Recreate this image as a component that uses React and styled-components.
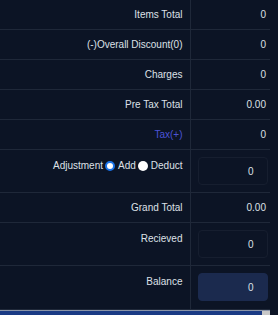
import React from "react";
import styled, { createGlobalStyle } from "styled-components";

const GlobalStyle = createGlobalStyle`
  html, body {
    margin: 0;
    padding: 0;
    background: #0c1425;
    font-family: "Liberation Sans", Arial, sans-serif;
    overflow: hidden;
  }
`;

const rows = [
  { label: "Items Total", value: "0" },
  { label: "(-)Overall Discount(0)", value: "0" },
  { label: "Charges", value: "0" },
  { label: "Pre Tax Total", value: "0.00" },
  { label: "Tax(+)", value: "0", link: true },
];

function App() {
  return (
    <>
      <GlobalStyle />
      <Page>
        <Summary>
          <tbody>
            {rows.map((r) => (
              <Row key={r.label}>
                <Label $link={r.link}>{r.label}</Label>
                <Value>{r.value}</Value>
              </Row>
            ))}
            <Row>
              <Label $top>
                <Adjust>
                  Adjustment
                  <Radio $checked />
                  Add
                  <Radio />
                  Deduct
                </Adjust>
              </Label>
              <Value $input>
                <Amount defaultValue="0" />
              </Value>
            </Row>
            <Row>
              <Label>Grand Total</Label>
              <Value>0.00</Value>
            </Row>
            <Row>
              <Label $top>Recieved</Label>
              <Value $input>
                <Amount defaultValue="0" />
              </Value>
            </Row>
            <Row>
              <Label $top>Balance</Label>
              <Value $input $tall>
                <Amount $filled readOnly value="0" />
              </Value>
            </Row>
          </tbody>
        </Summary>
        <Footer>
          <FooterBar />
          <FooterEnd />
        </Footer>
      </Page>
    </>
  );
}

export default App;

const Page = styled.div`
  width: 278px;
  height: 315px;
  overflow: hidden;
`;

const Summary = styled.table`
  width: 270px;
  border-collapse: collapse;
  table-layout: fixed;
`;

const Row = styled.tr`
  border-bottom: 1px solid #1f2839;
`;

const Label = styled.td`
  box-sizing: border-box;
  width: 190px;
  padding: ${(p) => (p.$top ? "8px 7px 0 0" : "7px 7px 7px 0")};
  height: ${(p) => (p.$top ? "auto" : "29px")};
  vertical-align: ${(p) => (p.$top ? "top" : "middle")};
  text-align: right;
  font-size: 10px;
  line-height: 15px;
  color: ${(p) => (p.$link ? "#4b53d6" : "#dde0e7")};
  border-right: 1px solid #1f2839;
  white-space: nowrap;
`;

const Value = styled.td`
  padding: ${(p) =>
    p.$input ? `7px 3px ${p.$tall ? "8px" : "7px"} 7px` : "7px 4px 7px 0"};
  text-align: right;
  font-size: 10px;
  line-height: 15px;
  color: #dde0e7;
`;

const Adjust = styled.span`
  display: inline-flex;
  align-items: center;
  justify-content: flex-end;
`;

const Radio = styled.span`
  display: inline-block;
  box-sizing: border-box;
  width: 10px;
  height: 10px;
  border-radius: 50%;
  margin: 0 3px 0 2px;
  background: #ffffff;
  border: ${(p) => (p.$checked ? "2.5px solid #1a73e8" : "none")};
`;

const Amount = styled.input`
  box-sizing: border-box;
  display: block;
  width: 70px;
  height: 28px;
  margin-left: auto;
  padding: 0 13px 0 6px;
  border-radius: 4px;
  border: 1px solid ${(p) => (p.$filled ? "#1b2a4e" : "#161e2f")};
  background: ${(p) => (p.$filled ? "#1b2a4e" : "#0c1425")};
  color: #dde0e7;
  font-family: "Liberation Sans", Arial, sans-serif;
  font-size: 10px;
  text-align: right;
  outline: none;
`;

const Footer = styled.div`
  display: flex;
  width: 270px;
`;

const FooterBar = styled.div`
  flex: 1;
  height: 6px;
  background: #1a3a84;
  border-top: 1px solid #8a94a8;
`;

const FooterEnd = styled.div`
  width: 8px;
  height: 6px;
  background: #c8c8c8;
  border-top: 1px solid #8a94a8;
`;
